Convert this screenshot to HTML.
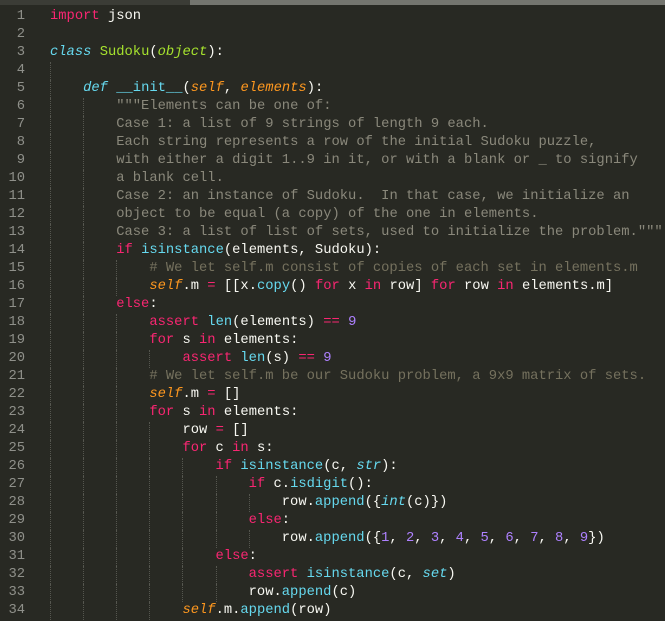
<!DOCTYPE html>
<html><head><meta charset="utf-8"><style>
html,body{margin:0;padding:0;}
body{width:665px;height:621px;background:#282923;overflow:hidden;position:relative;font-family:"Liberation Mono",monospace;font-size:13.8px;}
.top1{position:absolute;left:0;top:0;width:190px;height:5px;background:#3b3c36;}
.top2{position:absolute;left:190px;top:0;width:475px;height:5px;background:#74756f;}
.code{position:absolute;left:0;top:8px;}
.l{height:18px;line-height:18px;white-space:pre;position:relative;color:#f8f8f2;}
.ln{position:absolute;left:0;width:25px;text-align:right;color:#8f908a;}
.t{position:absolute;left:50px;}
i{display:inline-block;width:4ch;height:18px;vertical-align:top;border-left:1px dotted #55564f;box-sizing:border-box;font-style:normal;}
.k{color:#f92672}.b{color:#66d9ef}.bi{color:#66d9ef;font-style:italic}.g{color:#a6e22e}.gi{color:#a6e22e;font-style:italic}.o{color:#fd971f;font-style:italic}.n{color:#ae81ff}.c{color:#75715e}.s{color:#8a887b}
</style></head><body>
<div class="top1"></div><div class="top2"></div>
<div class="code">
<div class="l"><span class="ln">1</span><span class="t"><span class="k">import</span> json</span></div>
<div class="l"><span class="ln">2</span><span class="t"></span></div>
<div class="l"><span class="ln">3</span><span class="t"><span class="bi">class</span> <span class="g">Sudoku</span>(<span class="gi">object</span>):</span></div>
<div class="l"><span class="ln">4</span><span class="t"><i></i></span></div>
<div class="l"><span class="ln">5</span><span class="t"><i></i><span class="bi">def</span> <span class="b">__init__</span>(<span class="o">self</span>, <span class="o">elements</span>):</span></div>
<div class="l"><span class="ln">6</span><span class="t"><i></i><i></i><span class="s">"""Elements can be one of:</span></span></div>
<div class="l"><span class="ln">7</span><span class="t"><i></i><i></i><span class="s">Case 1: a list of 9 strings of length 9 each.</span></span></div>
<div class="l"><span class="ln">8</span><span class="t"><i></i><i></i><span class="s">Each string represents a row of the initial Sudoku puzzle,</span></span></div>
<div class="l"><span class="ln">9</span><span class="t"><i></i><i></i><span class="s">with either a digit 1..9 in it, or with a blank or _ to signify</span></span></div>
<div class="l"><span class="ln">10</span><span class="t"><i></i><i></i><span class="s">a blank cell.</span></span></div>
<div class="l"><span class="ln">11</span><span class="t"><i></i><i></i><span class="s">Case 2: an instance of Sudoku.  In that case, we initialize an</span></span></div>
<div class="l"><span class="ln">12</span><span class="t"><i></i><i></i><span class="s">object to be equal (a copy) of the one in elements.</span></span></div>
<div class="l"><span class="ln">13</span><span class="t"><i></i><i></i><span class="s">Case 3: a list of list of sets, used to initialize the problem."""</span></span></div>
<div class="l"><span class="ln">14</span><span class="t"><i></i><i></i><span class="k">if</span> <span class="b">isinstance</span>(elements, Sudoku):</span></div>
<div class="l"><span class="ln">15</span><span class="t"><i></i><i></i><i></i><span class="c"># We let self.m consist of copies of each set in elements.m</span></span></div>
<div class="l"><span class="ln">16</span><span class="t"><i></i><i></i><i></i><span class="o">self</span>.m <span class="k">=</span> [[x.<span class="b">copy</span>() <span class="k">for</span> x <span class="k">in</span> row] <span class="k">for</span> row <span class="k">in</span> elements.m]</span></div>
<div class="l"><span class="ln">17</span><span class="t"><i></i><i></i><span class="k">else</span>:</span></div>
<div class="l"><span class="ln">18</span><span class="t"><i></i><i></i><i></i><span class="k">assert</span> <span class="b">len</span>(elements) <span class="k">==</span> <span class="n">9</span></span></div>
<div class="l"><span class="ln">19</span><span class="t"><i></i><i></i><i></i><span class="k">for</span> s <span class="k">in</span> elements:</span></div>
<div class="l"><span class="ln">20</span><span class="t"><i></i><i></i><i></i><i></i><span class="k">assert</span> <span class="b">len</span>(s) <span class="k">==</span> <span class="n">9</span></span></div>
<div class="l"><span class="ln">21</span><span class="t"><i></i><i></i><i></i><span class="c"># We let self.m be our Sudoku problem, a 9x9 matrix of sets.</span></span></div>
<div class="l"><span class="ln">22</span><span class="t"><i></i><i></i><i></i><span class="o">self</span>.m <span class="k">=</span> []</span></div>
<div class="l"><span class="ln">23</span><span class="t"><i></i><i></i><i></i><span class="k">for</span> s <span class="k">in</span> elements:</span></div>
<div class="l"><span class="ln">24</span><span class="t"><i></i><i></i><i></i><i></i>row <span class="k">=</span> []</span></div>
<div class="l"><span class="ln">25</span><span class="t"><i></i><i></i><i></i><i></i><span class="k">for</span> c <span class="k">in</span> s:</span></div>
<div class="l"><span class="ln">26</span><span class="t"><i></i><i></i><i></i><i></i><i></i><span class="k">if</span> <span class="b">isinstance</span>(c, <span class="bi">str</span>):</span></div>
<div class="l"><span class="ln">27</span><span class="t"><i></i><i></i><i></i><i></i><i></i><i></i><span class="k">if</span> c.<span class="b">isdigit</span>():</span></div>
<div class="l"><span class="ln">28</span><span class="t"><i></i><i></i><i></i><i></i><i></i><i></i><i></i>row.<span class="b">append</span>({<span class="bi">int</span>(c)})</span></div>
<div class="l"><span class="ln">29</span><span class="t"><i></i><i></i><i></i><i></i><i></i><i></i><span class="k">else</span>:</span></div>
<div class="l"><span class="ln">30</span><span class="t"><i></i><i></i><i></i><i></i><i></i><i></i><i></i>row.<span class="b">append</span>({<span class="n">1</span>, <span class="n">2</span>, <span class="n">3</span>, <span class="n">4</span>, <span class="n">5</span>, <span class="n">6</span>, <span class="n">7</span>, <span class="n">8</span>, <span class="n">9</span>})</span></div>
<div class="l"><span class="ln">31</span><span class="t"><i></i><i></i><i></i><i></i><i></i><span class="k">else</span>:</span></div>
<div class="l"><span class="ln">32</span><span class="t"><i></i><i></i><i></i><i></i><i></i><i></i><span class="k">assert</span> <span class="b">isinstance</span>(c, <span class="bi">set</span>)</span></div>
<div class="l"><span class="ln">33</span><span class="t"><i></i><i></i><i></i><i></i><i></i><i></i>row.<span class="b">append</span>(c)</span></div>
<div class="l"><span class="ln">34</span><span class="t"><i></i><i></i><i></i><i></i><span class="o">self</span>.m.<span class="b">append</span>(row)</span></div>
</div>
</body></html>
